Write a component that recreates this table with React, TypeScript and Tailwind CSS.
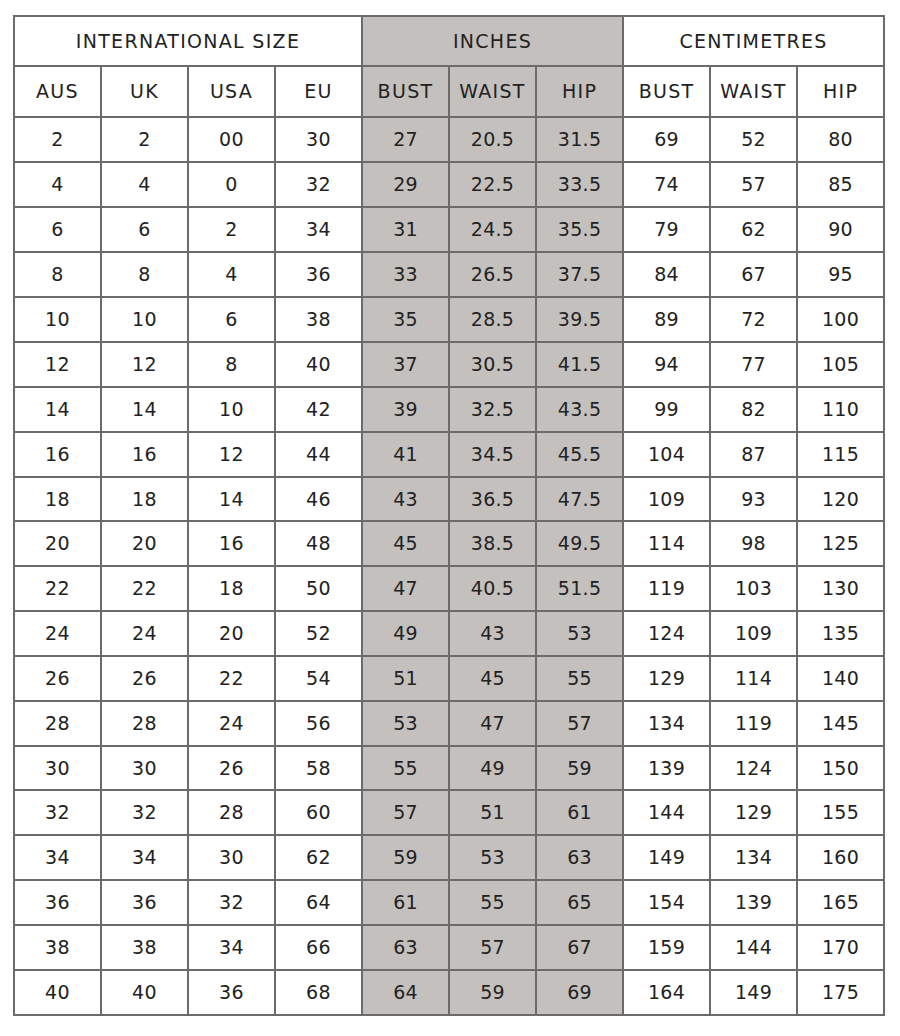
const intl = [
  [2, 2, '00', 30],
  [4, 4, '0', 32],
  [6, 6, '2', 34],
  [8, 8, '4', 36],
  [10, 10, '6', 38],
  [12, 12, '8', 40],
  [14, 14, '10', 42],
  [16, 16, '12', 44],
  [18, 18, '14', 46],
  [20, 20, '16', 48],
  [22, 22, '18', 50],
  [24, 24, '20', 52],
  [26, 26, '22', 54],
  [28, 28, '24', 56],
  [30, 30, '26', 58],
  [32, 32, '28', 60],
  [34, 34, '30', 62],
  [36, 36, '32', 64],
  [38, 38, '34', 66],
  [40, 40, '36', 68],
];

const inches = [
  ['27', '20.5', '31.5'],
  ['29', '22.5', '33.5'],
  ['31', '24.5', '35.5'],
  ['33', '26.5', '37.5'],
  ['35', '28.5', '39.5'],
  ['37', '30.5', '41.5'],
  ['39', '32.5', '43.5'],
  ['41', '34.5', '45.5'],
  ['43', '36.5', '47.5'],
  ['45', '38.5', '49.5'],
  ['47', '40.5', '51.5'],
  ['49', '43', '53'],
  ['51', '45', '55'],
  ['53', '47', '57'],
  ['55', '49', '59'],
  ['57', '51', '61'],
  ['59', '53', '63'],
  ['61', '55', '65'],
  ['63', '57', '67'],
  ['64', '59', '69'],
];

const cm = [
  [69, 52, 80],
  [74, 57, 85],
  [79, 62, 90],
  [84, 67, 95],
  [89, 72, 100],
  [94, 77, 105],
  [99, 82, 110],
  [104, 87, 115],
  [109, 93, 120],
  [114, 98, 125],
  [119, 103, 130],
  [124, 109, 135],
  [129, 114, 140],
  [134, 119, 145],
  [139, 124, 150],
  [144, 129, 155],
  [149, 134, 160],
  [154, 139, 165],
  [159, 144, 170],
  [164, 149, 175],
];

const cell = 'border-2 border-[#6b6b6b] text-center p-0 font-normal';
const head = `${cell} tracking-[1.3px]`;
const grey = 'bg-[#c4c0bd]';

export default function App() {
  return (
    <div className="w-[900px] h-[1036px] bg-white pt-[15px] pl-[13px]">
      <table
        className="border-collapse table-fixed w-[872px] text-[19px] text-[#222] tracking-[0.3px]"
        style={{ fontFamily: '"DejaVu Sans", sans-serif' }}
      >
        <colgroup>
          {Array.from({ length: 10 }).map((_, i) => (
            <col key={i} className="w-[87px]" />
          ))}
        </colgroup>
        <thead>
          <tr className="h-[50px]">
            <th colSpan={4} className={head}>INTERNATIONAL SIZE</th>
            <th colSpan={3} className={`${head} ${grey}`}>INCHES</th>
            <th colSpan={3} className={head}>CENTIMETRES</th>
          </tr>
          <tr className="h-[51px]">
            <th className={head}>AUS</th>
            <th className={head}>UK</th>
            <th className={head}>USA</th>
            <th className={head}>EU</th>
            <th className={`${head} ${grey}`}>BUST</th>
            <th className={`${head} ${grey}`}>WAIST</th>
            <th className={`${head} ${grey}`}>HIP</th>
            <th className={head}>BUST</th>
            <th className={head}>WAIST</th>
            <th className={head}>HIP</th>
          </tr>
        </thead>
        <tbody>
          {intl.map((row, i) => (
            <tr key={i} className={i === 8 || i === 14 ? 'h-[44px]' : 'h-[45px]'}>
              {row.map((v, j) => (
                <td key={`a${j}`} className={cell}>{v}</td>
              ))}
              {inches[i].map((v, j) => (
                <td key={`b${j}`} className={`${cell} ${grey}`}>{v}</td>
              ))}
              {cm[i].map((v, j) => (
                <td key={`c${j}`} className={cell}>{v}</td>
              ))}
            </tr>
          ))}
        </tbody>
      </table>
    </div>
  );
}
